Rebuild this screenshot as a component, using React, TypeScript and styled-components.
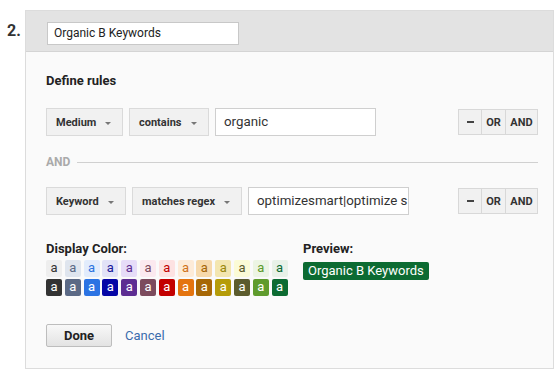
import React from "react";
import styled, { createGlobalStyle } from "styled-components";

const Global = createGlobalStyle`
  html, body { margin: 0; padding: 0; background: #fff; }
  body { font-family: Roboto, "Liberation Sans", Arial, sans-serif; color: #333; }
`;

const Page = styled.div`
  display: flex;
  align-items: flex-start;
  padding: 10px 0 0 7px;
`;

const Num = styled.div`
  width: 18px;
  padding-top: 11px;
  font-size: 16px;
  font-weight: 700;
  color: #333;
  line-height: 20px;
`;

const Panel = styled.div`
  width: 527px;
  border: 1px solid #dcdcdc;
  background: #fafafa;
`;

const Header = styled.div`
  height: 41px;
  box-sizing: border-box;
  background: #e3e3e3;
  border-bottom: 1px solid #d4d4d4;
  padding: 11px 0 0 21px;
`;

const NameInput = styled.div`
  width: 184px;
  height: 21px;
  border: 1px solid #c8c8c8;
  background: #fff;
  font-size: 12px;
  line-height: 21px;
  padding-left: 6px;
  color: #222;
`;

const Body = styled.div`
  padding: 21px 15px 21px 20px;
`;

const Title = styled.div`
  font-size: 13px;
  font-weight: 700;
  line-height: 16px;
  color: #222;
`;

const Row = styled.div<{ $mt: number }>`
  display: flex;
  align-items: center;
  gap: 6px;
  margin-top: ${(p) => p.$mt}px;
`;

const Select = styled.div<{ $w: number }>`
  width: ${(p) => p.$w}px;
  height: 28px;
  box-sizing: border-box;
  border: 1px solid #dadada;
  background: #f1f1f1;
  display: flex;
  align-items: center;
  justify-content: space-between;
  padding: 0 11px 0 9px;
  font-size: 11px;
  font-weight: 700;
  color: #333;
`;

const Caret = styled.span`
  width: 0;
  height: 0;
  border-left: 3.5px solid transparent;
  border-right: 3.5px solid transparent;
  border-top: 3.5px solid #777;
  margin-top: 2px;
`;

const Field = styled.div<{ $w: number }>`
  width: ${(p) => p.$w}px;
  height: 28px;
  box-sizing: border-box;
  border: 1px solid #cfcfcf;
  background: #fff;
  padding-left: 8px;
  font-size: 13.3px;
  line-height: 26px;
  color: #333;
  white-space: nowrap;
  overflow: hidden;
`;

const Spacer = styled.div`
  flex: 1;
`;

const BtnGroup = styled.div`
  display: flex;
  height: 26px;
`;

const GBtn = styled.div<{ $w: number }>`
  width: ${(p) => p.$w}px;
  box-sizing: border-box;
  border: 1px solid #d8d8d8;
  margin-left: -1px;
  background: #f1f1f1;
  display: flex;
  align-items: center;
  justify-content: center;
  font-size: 11px;
  font-weight: 700;
  color: #333;
`;

const Minus = styled.span`
  width: 7px;
  height: 2px;
  background: #444;
`;

const Sep = styled.div`
  display: flex;
  align-items: center;
  gap: 7px;
  margin-top: 18px;
  height: 16px;
  font-size: 12px;
  font-weight: 700;
  color: #aaa;
`;

const Line = styled.div`
  flex: 1;
  height: 1px;
  background: #d0d0d0;
`;

const ColorSection = styled.div`
  display: flex;
  margin-top: 26px;
`;

const ColorCol = styled.div`
  width: 257px;
`;

const Label = styled.div`
  font-size: 13px;
  font-weight: 700;
  line-height: 16px;
  color: #222;
`;

const SwatchGrid = styled.div`
  display: grid;
  grid-template-columns: repeat(13, 16px);
  column-gap: 2.8px;
  row-gap: 2px;
  margin-top: 3px;
`;

const Swatch = styled.div<{ $bg: string; $fg: string }>`
  height: 17px;
  border-radius: 2px;
  background: ${(p) => p.$bg};
  color: ${(p) => p.$fg};
  font-size: 13px;
  line-height: 16px;
  text-align: center;
`;

const Badge = styled.div`
  display: inline-block;
  margin-top: 5px;
  background: #0c6b32;
  color: #fff;
  font-size: 13px;
  line-height: 18px;
  padding: 0 5px;
  border-radius: 2px;
`;

const Actions = styled.div`
  display: flex;
  align-items: center;
  gap: 13px;
  margin-top: 28px;
`;

const Done = styled.div`
  width: 66px;
  height: 23px;
  box-sizing: border-box;
  border: 1px solid #bdbdbd;
  border-radius: 2px;
  background: linear-gradient(#f8f8f8, #e3e3e3);
  font-size: 13px;
  font-weight: 700;
  color: #222;
  display: flex;
  align-items: center;
  justify-content: center;
`;

const Cancel = styled.span`
  font-size: 13px;
  color: #3a6cad;
`;

const light: [string, string][] = [
  ["#eeeeee", "#333"],
  ["#dfe5ee", "#5a6985"],
  ["#e2ecfc", "#2a74e0"],
  ["#e2e2f7", "#1a1a9a"],
  ["#e6dcf8", "#5c2d91"],
  ["#fbe9ef", "#7b4a5c"],
  ["#fde2e2", "#c00000"],
  ["#fdebd8", "#d0731a"],
  ["#f6d9ac", "#a46406"],
  ["#f3e6b0", "#9a860b"],
  ["#fbfbd6", "#5a5a2c"],
  ["#ecf4e4", "#5c9a2c"],
  ["#e8f1e8", "#0c6b34"],
];

const dark: string[] = [
  "#333333",
  "#5b6985",
  "#2b73e3",
  "#0606a6",
  "#5d2d92",
  "#7c4b5d",
  "#c30000",
  "#e4740f",
  "#a66705",
  "#b59c09",
  "#5b5b2d",
  "#5f9b2d",
  "#0c6b32",
];

function RuleButtons() {
  return (
    <BtnGroup>
      <GBtn $w={24}>
        <Minus />
      </GBtn>
      <GBtn $w={25}>OR</GBtn>
      <GBtn $w={33}>AND</GBtn>
    </BtnGroup>
  );
}

export default function App() {
  return (
    <>
      <Global />
      <Page>
        <Num>2.</Num>
        <Panel>
          <Header>
            <NameInput>Organic B Keywords</NameInput>
          </Header>
          <Body>
            <Title>Define rules</Title>
            <Row $mt={19}>
              <Select $w={77}>
                Medium <Caret />
              </Select>
              <Select $w={80}>
                contains <Caret />
              </Select>
              <Field $w={161}>organic</Field>
              <Spacer />
              <RuleButtons />
            </Row>
            <Sep>
              AND
              <Line />
            </Sep>
            <Row $mt={17}>
              <Select $w={80}>
                Keyword <Caret />
              </Select>
              <Select $w={110}>
                matches regex <Caret />
              </Select>
              <Field $w={161}>optimizesmart|optimize s</Field>
              <Spacer />
              <RuleButtons />
            </Row>
            <ColorSection>
              <ColorCol>
                <Label>Display Color:</Label>
                <SwatchGrid>
                  {light.map(([bg, fg], i) => (
                    <Swatch key={"l" + i} $bg={bg} $fg={fg}>
                      a
                    </Swatch>
                  ))}
                  {dark.map((bg, i) => (
                    <Swatch key={"d" + i} $bg={bg} $fg="#fff">
                      a
                    </Swatch>
                  ))}
                </SwatchGrid>
              </ColorCol>
              <div>
                <Label>Preview:</Label>
                <Badge>Organic B Keywords</Badge>
              </div>
            </ColorSection>
            <Actions>
              <Done>Done</Done>
              <Cancel>Cancel</Cancel>
            </Actions>
          </Body>
        </Panel>
      </Page>
    </>
  );
}
